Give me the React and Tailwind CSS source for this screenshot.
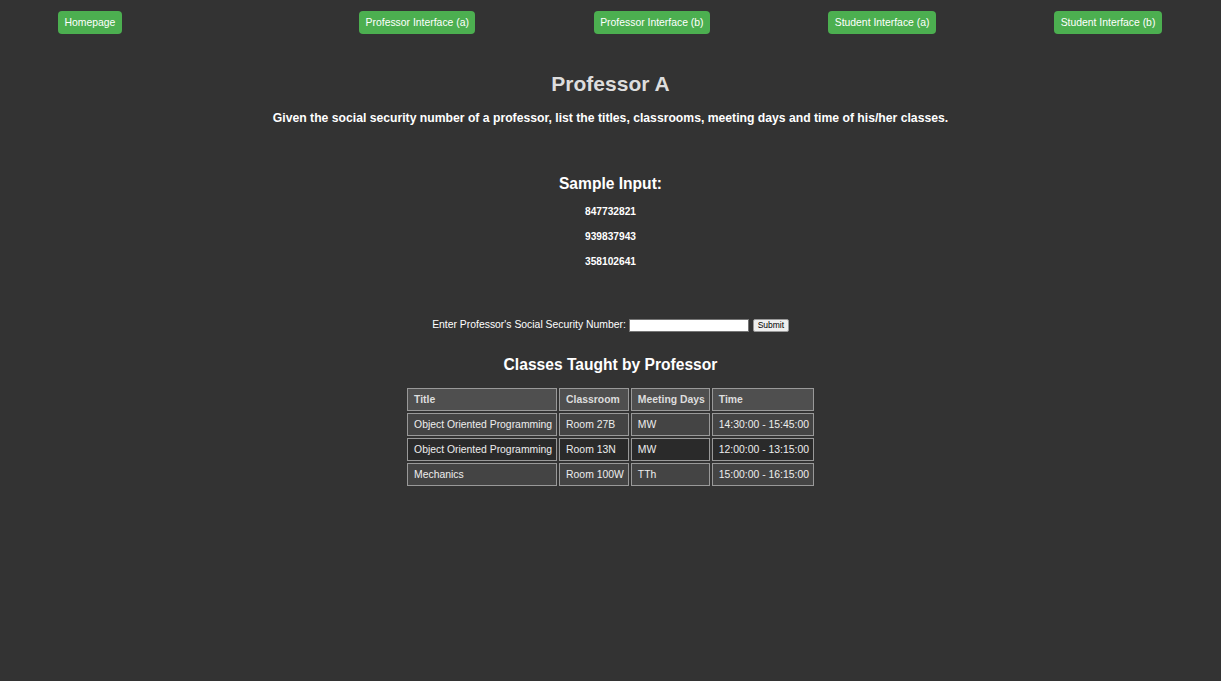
import React from "react";

const rows = [
  ["Object Oriented Programming", "Room 27B", "MW", "14:30:00 - 15:45:00", "bg-[#444444]"],
  ["Object Oriented Programming", "Room 13N", "MW", "12:00:00 - 13:15:00", "bg-[#2a2a2a]"],
  ["Mechanics", "Room 100W", "TTh", "15:00:00 - 16:15:00", "bg-[#444444]"],
];

function NavBtn({ children }) {
  return (
    <a className="inline-flex h-[23px] items-center rounded-[4px] bg-[#4caf50] px-[6.5px] text-[10.4px] text-white whitespace-nowrap">
      {children}
    </a>
  );
}

export default function App() {
  return (
    <div className="min-h-[681px] bg-[#333333] text-white" style={{ fontFamily: '"Liberation Sans", Arial, sans-serif' }}>
      <nav className="flex items-start pt-[11px]">
        <div className="flex w-[300px] pl-[58px]">
          <NavBtn>Homepage</NavBtn>
        </div>
        <div className="flex flex-1 justify-around">
          <NavBtn>Professor Interface (a)</NavBtn>
          <NavBtn>Professor Interface (b)</NavBtn>
          <NavBtn>Student Interface (a)</NavBtn>
          <NavBtn>Student Interface (b)</NavBtn>
        </div>
      </nav>

      <div className="flex flex-col items-center">
        <h1 className="mt-[38px] text-[21px] font-bold leading-[24px] text-[#dddddd]">Professor A</h1>
        <p className="mt-[14px] text-[12.2px] font-bold leading-[16px]">
          Given the social security number of a professor, list the titles, classrooms, meeting days and time of his/her classes.
        </p>

        <h2 className="mt-[48px] text-[15.6px] font-bold leading-[20px]">Sample Input:</h2>
        <div className="mt-[11px] flex flex-col items-center gap-[11px] text-[10.2px] font-bold leading-[14px]">
          <span>847732821</span>
          <span>939837943</span>
          <span>358102641</span>
        </div>

        <form className="mt-[49px] flex items-center text-[10.4px] leading-[14px]">
          <label>Enter Professor's Social Security Number:</label>
          <input type="text" className="ml-[3px] h-[13px] w-[120px] border border-[#767676] bg-white" />
          <button type="button" className="ml-[4px] h-[13px] w-[36px] rounded-[2px] border border-[#999] bg-[#efefef] text-[8.5px] leading-[11px] text-black">
            Submit
          </button>
        </form>

        <h2 className="mt-[23px] text-[15.6px] font-bold leading-[20px]">Classes Taught by Professor</h2>

        <table className="mt-[11px] border-separate border-spacing-[2px] text-[10.4px] leading-[13px] whitespace-nowrap">
          <thead>
            <tr className="bg-[#4f4f4f] text-left font-bold text-[#dddddd]">
              <th className="h-[23px] border border-[#999999] pl-[6px] pr-[4px] py-0">Title</th>
              <th className="border border-[#999999] pl-[6px] pr-[4px] py-0">Classroom</th>
              <th className="border border-[#999999] pl-[6px] pr-[4px] py-0">Meeting Days</th>
              <th className="border border-[#999999] pl-[6px] pr-[4px] py-0">Time</th>
            </tr>
          </thead>
          <tbody>
            {rows.map((r, i) => (
              <tr key={i} className={`${r[4]} text-[#eeeeee]`}>
                <td className="h-[23px] border border-[#999999] pl-[6px] pr-[4px] py-0">{r[0]}</td>
                <td className="border border-[#999999] pl-[6px] pr-[4px] py-0">{r[1]}</td>
                <td className="border border-[#999999] pl-[6px] pr-[4px] py-0">{r[2]}</td>
                <td className="border border-[#999999] pl-[6px] pr-[4px] py-0">{r[3]}</td>
              </tr>
            ))}
          </tbody>
        </table>
      </div>
    </div>
  );
}
